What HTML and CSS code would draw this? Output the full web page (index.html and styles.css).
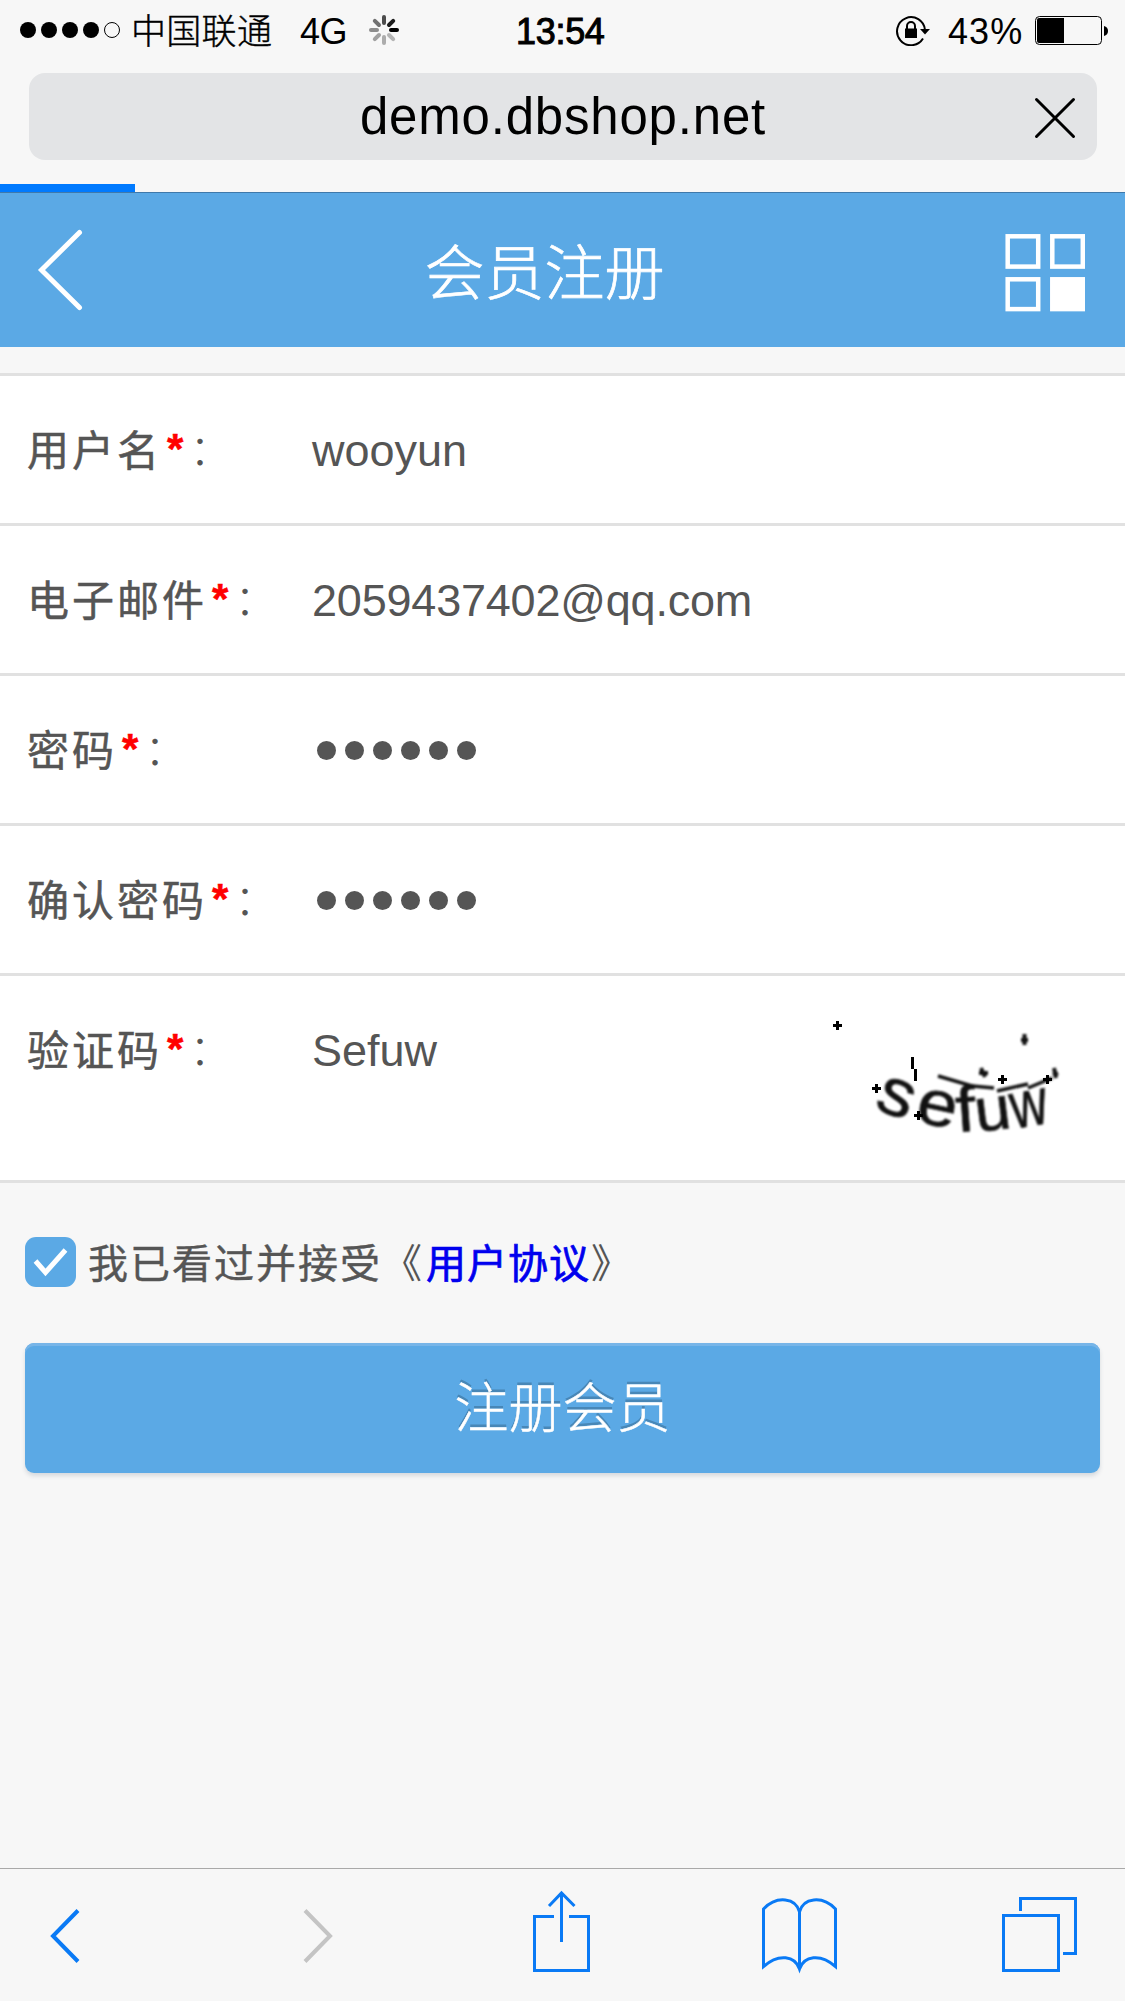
FILE: index.html
```html
<!DOCTYPE html>
<html lang="zh-CN">
<head>
<meta charset="utf-8">
<title>会员注册</title>
<link rel="stylesheet" href="styles.css">
</head>
<body>
<div class="screen">
  <div class="status">
    <div class="signal"><i></i><i></i><i></i><i></i><i class="empty"></i></div>
    <span class="carrier">中国联通</span>
    <span class="network">4G</span>
    <svg class="spinner" width="30" height="30" viewBox="-15 -15 30 30" stroke-width="4" stroke-linecap="round">
      <path d="M0-7V-13" stroke="#4c4c4c"/>
      <path d="M5-5L9.2-9.2" stroke="#1c1c1c"/>
      <path d="M7 0H13" stroke="#000"/>
      <path d="M5 5L9.2 9.2" stroke="#b4b4b4"/>
      <path d="M0 7V13" stroke="#acacac"/>
      <path d="M-5 5L-9.2 9.2" stroke="#a0a0a0"/>
      <path d="M-7 0H-13" stroke="#8c8c8c"/>
      <path d="M-5-5L-9.2-9.2" stroke="#707070"/>
    </svg>
    <span class="time">13:54</span>
    <svg class="lock" width="36" height="32" viewBox="895 14 36 32">
      <path d="M923 38.500A14 14 0 1 1 925 30" fill="none" stroke="#000" stroke-width="2"/>
      <path d="M920 29H930L925 34.500Z"/>
      <path d="M905 28.500H917V38H905Z"/>
      <path d="M907 29V26a4 4 0 0 1 8 0V29" fill="none" stroke="#000" stroke-width="2"/>
    </svg>
    <span class="percent">43%</span>
    <svg class="battery" width="74" height="30" viewBox="1035 15 74 30">
      <rect x="1035.500" y="16.500" width="66" height="28" rx="4" fill="none" stroke="#000"/>
      <path d="M1039 18H1064V43H1039Q1037 43 1037 41V20Q1037 18 1039 18Z"/>
      <path d="M1104 26Q1108 27 1108 31T1104 36Z"/>
    </svg>
  </div>

  <div class="address">
    <span class="url">demo.dbshop.net</span>
    <svg class="stop" width="42" height="42" viewBox="0 0 42 42"><path d="M2.500 2.500L39.500 39.500M39.500 2.500L2.500 39.500"/></svg>
  </div>
  <div class="loading"><div class="loaded"></div></div>

  <header class="header">
    <svg width="50" height="86" viewBox="36 227 50 86"><path d="M79.500 232.500L41.500 270L79.500 307.500" fill="none" stroke="#fff" stroke-width="5" stroke-linecap="round"/></svg>
    <h1>会员注册</h1>
    <svg class="grid" width="80" height="78" viewBox="1005 234 80 78" fill="none" stroke="#fff" stroke-width="4.500">
      <rect x="1007.700" y="236.300" width="30.500" height="30.300"/>
      <rect x="1052.300" y="236.300" width="30.500" height="30.300"/>
      <rect x="1007.700" y="279.300" width="30.500" height="29.800"/>
      <rect x="1052.300" y="279.300" width="30.500" height="29.800" fill="#fff"/>
    </svg>
  </header>

  <form class="fields">
    <div class="row"><label>用户名<b>*</b><span class="colon">：</span></label><span class="value">wooyun</span></div>
    <div class="row"><label>电子邮件<b>*</b><span class="colon">：</span></label><span class="value mail">2059437402@qq.com</span></div>
    <div class="row"><label>密码<b>*</b><span class="colon">：</span></label><span class="dots"><i></i><i></i><i></i><i></i><i></i><i></i></span></div>
    <div class="row"><label>确认密码<b>*</b><span class="colon">：</span></label><span class="dots"><i></i><i></i><i></i><i></i><i></i><i></i></span></div>
    <div class="row verify"><label>验证码<b>*</b><span class="colon">：</span></label><span class="value">Sefuw</span>
      <svg class="captcha" width="260" height="150" viewBox="820 1010 260 150">
        <g class="soft">
          <text transform="translate(873 1108) rotate(21)" font-size="67" textLength="36" lengthAdjust="spacingAndGlyphs">s</text>
          <text transform="translate(914 1121) rotate(12)" font-size="64" textLength="40" lengthAdjust="spacingAndGlyphs">e</text>
          <text transform="translate(957 1132) rotate(-4)" font-size="64" textLength="20" lengthAdjust="spacingAndGlyphs">f</text>
          <text transform="translate(977 1132) rotate(-7)" font-size="61" textLength="36" lengthAdjust="spacingAndGlyphs">u</text>
          <text transform="translate(1014 1129) rotate(-10)" font-size="66" textLength="37" lengthAdjust="spacingAndGlyphs">w</text>
          <path d="M938 1076L972 1086L994 1088M997 1091L1028 1084M1028 1088L1052 1078"/>
          <path class="speck" d="M1024.500 1034V1045M1021 1040H1028M981 1068L985 1077M979 1073H988M1054 1068L1056 1078M1053 1075L1058 1073"/>
        </g>
        <path class="marks" d="M912.500 1057V1069M915.500 1069V1081M837.500 1021V1030M833 1025.500H842M1002.500 1075V1084M998 1079.500H1007M1047.500 1075V1084M1043 1079.500H1052M876.500 1084V1093M872 1088.500H881M918.500 1111V1120M914 1115.500H923"/>
      </svg>
    </div>
  </form>

  <div class="agree">
    <svg class="check" width="51" height="50" viewBox="0 0 51 50"><rect width="51" height="50" rx="11"/><path d="M10.500 24L20.500 35.500L40.500 13"/></svg>
    <span class="terms">我已看过并接受<span class="open">《</span><a>用户协议</a><span class="close">》</span></span>
  </div>
  <button class="submit" type="button">注册会员</button>

  <nav class="toolbar">
    <svg viewBox="0 1869 225 132"><path d="M78 1910.500L53 1936L78 1961.500"/></svg>
    <svg viewBox="225 1869 225 132" class="off"><path d="M305 1910.500L330 1936L305 1961.500"/></svg>
    <svg viewBox="450 1869 225 132"><path d="M554 1916.500H534.500V1970.500H588.500V1916.500H569M561.500 1942V1893M549 1906L561.500 1893L574.500 1906"/></svg>
    <svg viewBox="675 1869 225 132"><path d="M799.500 1969V1912C796 1898 777 1895 763.500 1909V1966.500C779 1953 795 1956 799.500 1969C804 1956 820 1953 835.500 1966.500V1909C822 1895 803 1898 799.500 1912"/></svg>
    <svg viewBox="900 1869 225 132"><path d="M1003.500 1915.500H1058.500V1970.500H1003.500ZM1020.500 1911V1898.500H1075.500V1953.500H1063"/></svg>
  </nav>
</div>
</body>
</html>
```
FILE: styles.css
```css
* { box-sizing: border-box; }

body {
  margin: 0;
  background: #f7f7f7;
  font-family: "Liberation Sans", "Noto Sans CJK SC", sans-serif;
}

svg { display: block; flex: none; }

.screen {
  display: flex;
  flex-direction: column;
  width: 1125px;
  height: 2001px;
}

/* status bar */
.status {
  display: flex;
  align-items: center;
  height: 60px;
  padding: 0 16px 0 20px;
  font-size: 36px;
  line-height: 60px;
  color: #000;
}
.signal { display: flex; gap: 5px; }
.signal i {
  width: 16px;
  height: 16px;
  border-radius: 50%;
  background: #000;
}
.signal .empty { background: none; border: 1px solid #000; }
.carrier, .network, .time, .percent { padding-top: 3px; }
.carrier { width: 144px; margin-left: 11px; font-size: 35px; font-weight: 300; letter-spacing: .3px; -webkit-text-stroke: .4px #000; }
.network { width: 52px; margin-left: 25px; letter-spacing: -.5px; }
.spinner { margin-left: 17px; }
.time { margin-left: 117px; letter-spacing: -.3px; -webkit-text-stroke: 1px #000; }
.lock { margin-left: auto; }
.percent { width: 86px; margin-left: 17px; letter-spacing: 1.1px; }
.battery { margin-left: 1px; }

/* address bar */
.address {
  position: relative;
  height: 87px;
  margin: 13px 28px 0 29px;
  border-radius: 16px;
  background: #e3e4e6;
  text-align: center;
}
.url { font-size: 51px; line-height: 88px; letter-spacing: .8px; }
.stop {
  position: absolute;
  top: 23.5px;
  right: 21.5px;
  fill: none;
  stroke: #000;
  stroke-width: 3;
  stroke-linecap: round;
}
.loading { height: 33px; padding-top: 24px; border-bottom: 1px solid #3f79ab; }
.loaded { width: 135px; height: 8px; background: #007aff; }

/* page header */
.header {
  display: flex;
  align-items: center;
  justify-content: space-between;
  height: 154px;
  padding: 0 41px 0 36px;
  background: #5ba9e5;
}
.header h1 {
  margin: 0;
  padding: 10px 2px 0 0;
  font-size: 60px;
  font-weight: 300;
  line-height: 80px;
  color: #fff;
  -webkit-text-stroke: .7px #fff;
}
.header .grid { margin: 6px -1px 0 0; }

/* form rows */
.fields { margin-top: 26px; border-top: 3px solid #e1e1e1; background: #fff; }
.row {
  display: flex;
  height: 150px;
  padding: 1px 45px 0 27px;
  border-bottom: 3px solid #e1e1e1;
  font-size: 45px;
  line-height: 147px;
  color: #555;
}
.row label {
  width: 285px;
  padding-top: 1px;
  font-size: 42px;
  letter-spacing: 3px;
  white-space: nowrap;
  -webkit-text-stroke: .5px #555;
}
.row b {
  margin: 0 3px 0 5px;
  line-height: 1;
  color: #f00;
  vertical-align: 3px;
  -webkit-text-stroke: .5px #f00;
}
.colon { font-weight: 300; line-height: 1; vertical-align: 1px; -webkit-text-stroke: 0; }
.mail { letter-spacing: -.2px; }
.dots { display: flex; align-items: center; gap: 9px; height: 147px; padding: 0 0 0 5px; }
.dots i { width: 19px; height: 19px; border-radius: 50%; background: #555; }
.verify { height: 207px; }
.captcha { margin: 33px 0 0 auto; }
.captcha .soft { filter: blur(1px); }
.captcha text { fill: #111; stroke: #111; stroke-width: .7; }
.captcha path { fill: none; stroke: #111; stroke-width: 3.5; }
.captcha .speck { stroke-width: 4; }
.captcha .marks { stroke: #000; stroke-width: 3; }

/* agreement and submit */
.agree {
  display: flex;
  align-items: center;
  height: 50px;
  margin: 54px 25px 0;
}
.check { fill: #5ba9e5; }
.check path { fill: none; stroke: #fff; stroke-width: 5; }
.terms {
  padding-top: 4px;
  margin-left: 12px;
  font-size: 40px;
  line-height: 50px;
  letter-spacing: 2px;
  color: #555;
  white-space: nowrap;
  -webkit-text-stroke: .4px #555;
}
.terms a { margin-left: 2px; color: #00e; letter-spacing: 1px; -webkit-text-stroke: .7px #00e; }
.terms .open, .terms .close { -webkit-text-stroke: 0; }
.terms .close { margin-left: 1px; }
.submit {
  height: 130px;
  margin: 56px 25px 0;
  padding: 0;
  border: 0;
  border-radius: 9px;
  background: #5ba9e5;
  box-shadow: inset 0 3px 0 #77b5e8, 0 3px 4px #d6dade;
  font: 300 54px/133px "Liberation Sans", "Noto Sans CJK SC", sans-serif;
  color: #fff;
  text-shadow: 0 -3px 0 #4887b7;
  -webkit-text-stroke: .5px #fff;
}

/* bottom toolbar */
.toolbar {
  display: flex;
  height: 133px;
  margin-top: auto;
  border-top: 1px solid #a9a9a9;
}
.toolbar svg {
  width: 225px;
  height: 132px;
  fill: none;
  stroke: #0a7af5;
  stroke-width: 3;
}
.toolbar svg:nth-child(-n+2) { stroke-width: 4; }
.toolbar .off { stroke: #c4c4c4; }
```
